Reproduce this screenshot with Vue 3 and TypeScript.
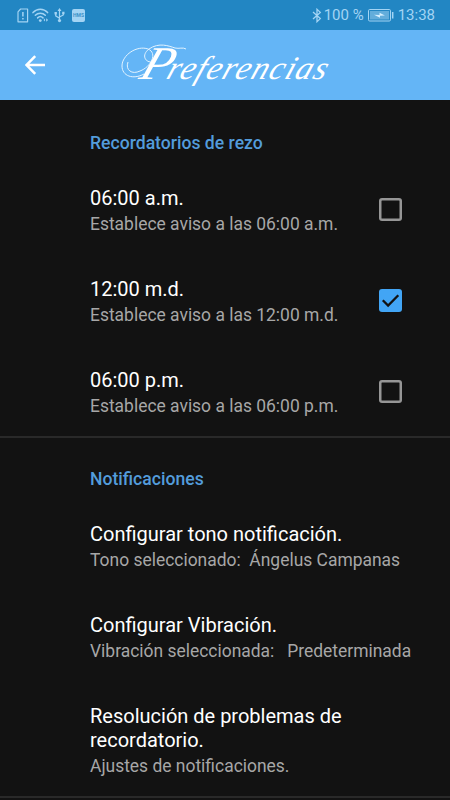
<script setup lang="ts">
import { ref } from 'vue'

interface Preference {
  title: string
  summary: string
  checked?: boolean
}

interface Section {
  heading: string
  items: Preference[]
}

const sections = ref<Section[]>([
  {
    heading: 'Recordatorios de rezo',
    items: [
      { title: '06:00 a.m.', summary: 'Establece aviso a las 06:00 a.m.', checked: false },
      { title: '12:00 m.d.', summary: 'Establece aviso a las 12:00 m.d.', checked: true },
      { title: '06:00 p.m.', summary: 'Establece aviso a las 06:00 p.m.', checked: false },
    ],
  },
  {
    heading: 'Notificaciones',
    items: [
      { title: 'Configurar tono notificación.', summary: 'Tono seleccionado:  Ángelus Campanas' },
      { title: 'Configurar Vibración.', summary: 'Vibración seleccionada:   Predeterminada' },
      { title: 'Resolución de problemas de recordatorio.', summary: 'Ajustes de notificaciones.' },
    ],
  },
])

function toggle(item: Preference) {
  if (item.checked !== undefined) item.checked = !item.checked
}
</script>

<template>
  <div class="screen">
    <header class="status">
      <div class="status-left">
        <svg class="sim" width="12" height="15" viewBox="0 0 12 15">
          <path d="M3.600 1H10.600v12.800H1V3.800z" fill="none" stroke="currentColor" stroke-width="1.200" stroke-linejoin="round" />
          <path d="M5.900 4v4.600M5.900 9.900v1.700" stroke="currentColor" stroke-width="1.500" />
        </svg>
        <svg class="wifi" width="18" height="15" viewBox="0 0 18 15">
          <g fill="none" stroke="currentColor" stroke-width="1.500" stroke-linecap="round">
            <path d="M1 4.600C5 .2 11.600.2 15.600 4.600" />
            <path d="M3.300 7.300C6 4.400 10.600 4.400 13.300 7.300" />
            <path d="M5.600 9.900C7.200 8.300 9.400 8.300 11 9.900" />
          </g>
          <circle cx="8.300" cy="12.600" r="1.400" fill="currentColor" />
          <path d="M13 10.500v3L11.500 12zM14.200 10.200v3.600l1.900-1.800z" fill="currentColor" />
        </svg>
        <svg class="usb" width="11" height="15" viewBox="0 0 11 15">
          <path d="M5.500 2v10M5.500 10.200L1.700 7.800V5.600M5.500 9L9.300 7V5" fill="none" stroke="currentColor" stroke-width="1.200" />
          <path d="M5.500 0l2 3h-4zM.5 4h2.400v2.400H.5zM8.200 3.800h2.300v2.400H8.200z" fill="currentColor" />
          <circle cx="5.500" cy="12.600" r="1.600" fill="currentColor" />
        </svg>
        <span class="hms">HMS</span>
      </div>
      <div class="status-right">
        <svg width="10" height="15" viewBox="0 0 10 15">
          <path d="M1 4l7.300 6.600L5 13.700V1.300l3.300 3.100L1 11" fill="none" stroke="currentColor" stroke-width="1.300" />
        </svg>
        <span class="percent">100 %</span>
        <svg class="battery" width="26" height="13" viewBox="0 0 26 13">
          <rect x=".5" y=".5" width="22" height="11.500" rx="1.200" fill="none" stroke="currentColor" />
          <rect x="2" y="2" width="19" height="8.500" fill="currentColor" opacity=".5" />
          <path d="M24.700 3v6.500" stroke="currentColor" stroke-width="1.500" />
          <path d="M6 5.800l5.500.2V3.800l5.500 2.800-5 .1v2z" fill="#d5efff" />
        </svg>
        <span class="clock">13:38</span>
      </div>
    </header>

    <nav class="toolbar">
      <svg class="back" width="20" height="20" viewBox="0 0 20 20" role="img" aria-label="Volver">
        <path d="M10.200 1.200L1.600 10l8.600 8.800M2 10h18" fill="none" stroke="#fff" stroke-width="2.500" />
      </svg>
      <h1 class="title">
        <svg class="flourish" width="70" height="42" viewBox="0 0 70 42" aria-hidden="true">
          <path d="M8 21C5 29 12 34 20 30C31 26 38 12 28 8C17 4 2 14 2 25C2 35 13 39 24 33" />
          <path d="M33 21C25 22 21 14 29 8C39 1 49 5 55 7C59 8 63 6 66 8" />
        </svg>
        <span class="initial">P</span><span class="rest">referencias</span>
      </h1>
    </nav>

    <main>
      <section v-for="section in sections" :key="section.heading" class="section">
        <h2 class="heading">{{ section.heading }}</h2>
        <div v-for="item in section.items" :key="item.title" class="item" @click="toggle(item)">
          <div class="copy">
            <div class="item-title">{{ item.title }}</div>
            <div class="summary">{{ item.summary }}</div>
          </div>
          <span v-if="item.checked !== undefined" class="box" :class="{ on: item.checked }">
            <svg v-if="item.checked" width="23" height="23" viewBox="0 0 23 23">
              <path d="M3.800 11.200l5.300 5.300L19.300 6.200" fill="none" stroke="#121212" stroke-width="2.300" />
            </svg>
          </span>
        </div>
      </section>
      <div class="end-line"></div>
    </main>
  </div>
</template>

<style>
body {
  margin: 0;
  background: #121212;
}
</style>

<style scoped>
.screen {
  width: 450px;
  height: 800px;
  overflow: hidden;
  background: #121212;
  font-family: Roboto, "Liberation Sans", sans-serif;
}

.status {
  box-sizing: border-box;
  height: 30px;
  padding: 0 15px 0 17px;
  display: flex;
  justify-content: space-between;
  align-items: center;
  background: #2286c3;
  color: #a3d4f4;
}

.status-left,
.status-right {
  display: flex;
  align-items: center;
}

.wifi {
  margin-left: 3px;
}

.usb {
  margin-left: 4px;
}

.hms {
  width: 13px;
  height: 13px;
  margin-left: 7px;
  border-radius: 2px;
  background: #a3d4f4;
  color: #3c91c8;
  font-size: 5px;
  font-weight: 700;
  line-height: 13px;
  text-align: center;
}

.percent {
  margin-left: 2px;
  font-size: 15px;
}

.battery {
  margin-left: 4px;
}

.clock {
  margin-left: 4px;
  font-size: 15px;
}

.toolbar {
  height: 70px;
  display: flex;
  align-items: center;
  background: #64b5f6;
}

.back {
  margin-left: 25px;
}

.title {
  position: relative;
  display: flex;
  align-items: baseline;
  margin: 0 0 0 75px;
  padding-left: 19px;
  color: #fff;
  font-family: "Liberation Serif", serif;
  font-style: italic;
  font-weight: 400;
  line-height: 50px;
}

.flourish {
  position: absolute;
  left: 0;
  top: 3px;
  fill: none;
  stroke: #e2f3ff;
  stroke-width: 1;
}

.initial {
  display: inline-block;
  width: 30px;
  font-size: 47px;
  transform: scaleX(1.1) skewX(-18deg);
  transform-origin: left 75%;
}

.rest {
  display: inline-block;
  font-size: 33px;
  letter-spacing: 1.300px;
  transform: skewX(-20deg);
}

.section + .section .heading {
  border-top: 2px solid #292929;
  padding-top: 31px;
}

.heading {
  box-sizing: border-box;
  height: 63px;
  margin: 0;
  padding: 33px 0 0 90px;
  color: #539cdb;
  font-size: 17.600px;
  font-weight: 500;
  line-height: 20px;
}

.item {
  box-sizing: border-box;
  min-height: 91px;
  padding: 23px 48px 17px 90px;
  display: flex;
  justify-content: space-between;
}

.copy {
  width: 270px;
}

.item-title {
  color: #fff;
  font-size: 20px;
  line-height: 24px;
}

.summary {
  margin-top: 2px;
  color: #a7a7a7;
  font-size: 17.450px;
  line-height: 25px;
  white-space: pre;
}

.box {
  flex: none;
  width: 23px;
  height: 23px;
  margin-top: 12px;
  border-radius: 3px;
  box-shadow: inset 0 0 0 2.500px #969696;
}

.box.on {
  display: grid;
  place-items: center;
  background: #42a5f5;
  box-shadow: none;
}

.end-line {
  height: 2px;
  background: #292929;
}
</style>
